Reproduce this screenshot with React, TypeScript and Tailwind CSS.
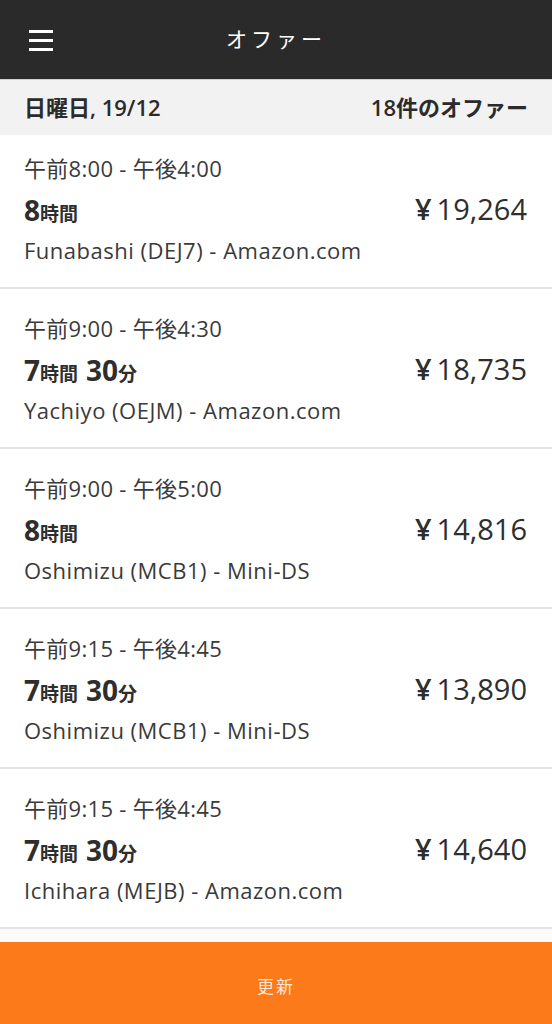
const offers = [
  { time: '午前8:00 - 午後4:00', h: '8', m: '', price: '19,264', place: 'Funabashi (DEJ7) - Amazon.com' },
  { time: '午前9:00 - 午後4:30', h: '7', m: '30', price: '18,735', place: 'Yachiyo (OEJM) - Amazon.com' },
  { time: '午前9:00 - 午後5:00', h: '8', m: '', price: '14,816', place: 'Oshimizu (MCB1) - Mini-DS' },
  { time: '午前9:15 - 午後4:45', h: '7', m: '30', price: '13,890', place: 'Oshimizu (MCB1) - Mini-DS' },
  { time: '午前9:15 - 午後4:45', h: '7', m: '30', price: '14,640', place: 'Ichihara (MEJB) - Amazon.com' },
];

const font = "font-['Open_Sans','Noto_Sans_CJK_JP',sans-serif]";

function OfferRow({ o, first }: { o: (typeof offers)[number]; first: boolean }) {
  return (
    <div className={`flex items-center justify-between border-b-2 border-[#e3e3e3] bg-white pl-6 pr-[25px] pb-[22px] ${first ? 'pt-[18px]' : 'pt-6'}`}>
      <div className="flex flex-col">
        <div className="h-[30px] text-[22px] leading-[30px] tracking-[0.3px] text-[#3a3a3a]">{o.time}</div>
        <div className="mt-[10px] flex h-[34px] items-baseline leading-[34px] text-[#2e2e2e] font-bold">
          <span className="text-[28px] leading-[34px]">{o.h}</span>
          <span className="text-[19px] leading-[34px]">時間</span>
          {o.m && (
            <>
              <span className="ml-2 text-[28px] leading-[34px]">{o.m}</span>
              <span className="text-[19px] leading-[34px]">分</span>
            </>
          )}
        </div>
        <div className="mt-2 h-[30px] text-[22px] leading-[30px] tracking-[0.5px] text-[#3a3a3a]">{o.place}</div>
      </div>
      <div className="text-[29px] leading-[34px] text-[#2e2e2e] font-medium">
        <span className="mr-[5px] font-semibold">¥</span>
        {o.price}
      </div>
    </div>
  );
}

export default function App() {
  return (
    <div className={`flex h-[1024px] w-[552px] flex-col overflow-hidden bg-white ${font}`}>
      <header className="relative flex h-20 shrink-0 items-center justify-center bg-[#2b2a2b] border-b border-[#cfcfcf]">
        <button className="absolute left-[29px] top-[30px] flex flex-col gap-[6px]">
          <span className="block h-[3px] w-6 bg-white" />
          <span className="block h-[3px] w-6 bg-white" />
          <span className="block h-[3px] w-6 bg-white" />
        </button>
        <h1 className="text-[21px] tracking-[4px] text-white">オファー</h1>
      </header>
      <div className="flex h-[55px] shrink-0 items-center justify-between bg-[#f2f2f2] px-6 text-[22px] font-semibold text-[#2b2b2b]">
        <span>日曜日, 19/12</span>
        <span>18件のオファー</span>
      </div>
      <div className="flex-1 overflow-hidden">
        {offers.map((o, i) => (
          <OfferRow key={i} o={o} first={i === 0} />
        ))}
        <div className="h-full bg-[#fbfbfa]" />
      </div>
      <button className="h-[82px] shrink-0 bg-[#fc7a1a] pt-2 text-[17px] tracking-[2px] text-[#fde9d6]">
        更新
      </button>
    </div>
  );
}
